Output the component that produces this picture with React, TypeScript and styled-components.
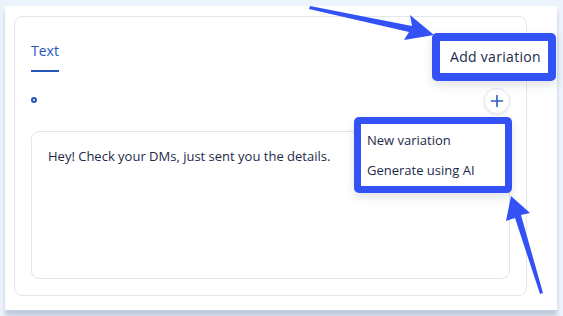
import styled, { createGlobalStyle } from "styled-components";

const GlobalStyle = createGlobalStyle`
  html, body {
    margin: 0;
    padding: 0;
    background: #edf3fc;
    font-family: "Open Sans", "Noto Sans", sans-serif;
    color: #1c2a4a;
  }
  * {
    box-sizing: border-box;
  }
`;

const ACCENT = "#3352f5";

export default function App() {
  return (
    <>
      <GlobalStyle />
      <Stage>
        <Panel>
          <Card>
            <TabBar>
              <Tab>Text</Tab>
            </TabBar>
            <Toolbar>
              <Dot />
              <PlusButton aria-label="Add variation">
                <svg width="14" height="14" viewBox="0 0 14 14">
                  <path
                    d="M7 1.5v11M1.5 7h11"
                    stroke="#2f5bc4"
                    strokeWidth="1.6"
                    strokeLinecap="round"
                  />
                </svg>
              </PlusButton>
            </Toolbar>
            <Editor>Hey! Check your DMs, just sent you the details.</Editor>
          </Card>
        </Panel>

        <Callout>Add variation</Callout>

        <Menu>
          <MenuItem>New variation</MenuItem>
          <MenuItem>Generate using AI</MenuItem>
        </Menu>

        <Arrows width="563" height="316" viewBox="0 0 563 316">
          <path d="M310 6 L412 26 L410 15 L434 35 L404 40 L409 32 L309 9 Z" fill={ACCENT} />
          <path d="M540 294 L515 218 L506 221 L511 196 L530 213 L521 215 L543 293 Z" fill={ACCENT} />
        </Arrows>
      </Stage>
    </>
  );
}

const Stage = styled.div`
  position: relative;
  width: 563px;
  height: 316px;
  overflow: hidden;
  padding: 6px 0 0 5px;
`;

const Panel = styled.div`
  width: 552px;
  height: 304px;
  background: #ffffff;
  padding: 10px 30px 14px 9px;
  box-shadow: 0 6px 4px rgba(110, 130, 160, 0.35);
`;

const Card = styled.div`
  height: 100%;
  border: 1px solid #e3e6eb;
  border-radius: 8px;
  padding: 0 16px 16px 16px;
  display: flex;
  flex-direction: column;
`;

const TabBar = styled.div`
  height: 55px;
  display: flex;
  align-items: flex-end;
`;

const Tab = styled.div`
  font-size: 14px;
  line-height: 20px;
  color: #2456b8;
  padding-bottom: 9px;
  border-bottom: 2px solid #2456b8;
`;

const Toolbar = styled.div`
  margin-top: 16px;
  height: 26px;
  display: flex;
  align-items: center;
  justify-content: space-between;
`;

const Dot = styled.span`
  width: 6px;
  height: 6px;
  border: 2px solid #2456b8;
  border-radius: 50%;
  margin-top: -2px;
`;

const PlusButton = styled.button`
  width: 26px;
  height: 26px;
  border-radius: 50%;
  border: 1px solid #e6e9ee;
  background: #fff;
  box-shadow: 0 1px 3px rgba(40, 60, 100, 0.12);
  display: flex;
  align-items: center;
  justify-content: center;
  padding: 0;
`;

const Editor = styled.div`
  margin-top: 17px;
  flex: 1;
  border: 1px solid #e3e6eb;
  border-radius: 8px;
  padding: 15px 16px;
  font-size: 13px;
  line-height: 18px;
  color: #1c2a4a;
`;

const Callout = styled.div`
  position: absolute;
  left: 432px;
  top: 33px;
  width: 124px;
  height: 48px;
  border: 8px solid ${ACCENT};
  border-radius: 5px;
  background: #fff;
  font-size: 14px;
  line-height: 32px;
  letter-spacing: 0.3px;
  padding-left: 10px;
  color: #1c2a4a;
  box-shadow: 0 4px 10px rgba(40, 60, 100, 0.15);
`;

const Menu = styled.div`
  position: absolute;
  left: 354px;
  top: 117px;
  width: 158px;
  height: 76px;
  border: 7px solid ${ACCENT};
  border-radius: 5px;
  background: #fff;
  padding: 1px 0 0 6px;
  display: flex;
  flex-direction: column;
  box-shadow: 0 4px 10px rgba(40, 60, 100, 0.15);
`;

const MenuItem = styled.div`
  height: 30px;
  font-size: 13px;
  line-height: 30px;
  color: #1c2a4a;
`;

const Arrows = styled.svg`
  position: absolute;
  left: 0;
  top: 0;
  pointer-events: none;
`;
